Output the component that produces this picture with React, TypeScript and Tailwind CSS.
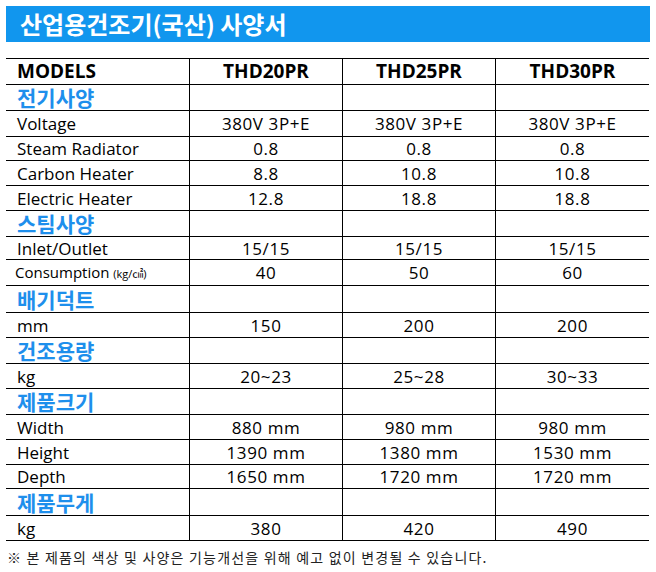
import React from "react";

type Row =
  | { kind: "head"; h: number }
  | { kind: "cat"; label: string; h: number }
  | { kind: "data"; label: React.ReactNode; vals: string[]; h: number };

const rows: Row[] = [
  { kind: "head", h: 26 },
  { kind: "cat", label: "전기사양", h: 26 },
  { kind: "data", label: "Voltage", vals: ["380V 3P+E", "380V 3P+E", "380V 3P+E"], h: 26 },
  { kind: "data", label: "Steam Radiator", vals: ["0.8", "0.8", "0.8"], h: 24 },
  { kind: "data", label: "Carbon Heater", vals: ["8.8", "10.8", "10.8"], h: 25 },
  { kind: "data", label: "Electric Heater", vals: ["12.8", "18.8", "18.8"], h: 25 },
  { kind: "cat", label: "스팀사양", h: 26 },
  { kind: "data", label: "Inlet/Outlet", vals: ["15/15", "15/15", "15/15"], h: 23 },
  {
    kind: "data",
    label: (
      <span className="text-[15px] -ml-[2px]">
        Consumption <span className="text-[11px]">(kg/㎠)</span>
      </span>
    ),
    vals: ["40", "50", "60"],
    h: 26,
  },
  { kind: "cat", label: "배기덕트", h: 27 },
  { kind: "data", label: "mm", vals: ["150", "200", "200"], h: 25 },
  { kind: "cat", label: "건조용량", h: 26 },
  { kind: "data", label: "kg", vals: ["20~23", "25~28", "30~33"], h: 25 },
  { kind: "cat", label: "제품크기", h: 26 },
  { kind: "data", label: "Width", vals: ["880 mm", "980 mm", "980 mm"], h: 25 },
  { kind: "data", label: "Height", vals: ["1390 mm", "1380 mm", "1530 mm"], h: 25 },
  { kind: "data", label: "Depth", vals: ["1650 mm", "1720 mm", "1720 mm"], h: 24 },
  { kind: "cat", label: "제품무게", h: 27 },
  { kind: "data", label: "kg", vals: ["380", "420", "490"], h: 25 },
];

const font = { fontFamily: '"Open Sans", "Noto Sans CJK KR", sans-serif' };
const kr = { fontFamily: '"Noto Sans CJK KR", sans-serif' };

export default function App() {
  return (
    <div className="w-[656px] h-[572px] bg-white p-[6px] text-black" style={font}>
      <div className="h-[36px] bg-[#1196ee] flex items-center pl-[14px]">
        <span className="text-white font-bold text-[24px] leading-none" style={kr}>
          산업용건조기(국산) 사양서
        </span>
      </div>
      <div className="mt-[16px] w-[643px] border-t border-black">
        {rows.map((r, i) => (
          <div
            key={i}
            className="grid grid-cols-[183px_153px_153px_154px] border-b border-black box-border"
            style={{ height: r.h }}
          >
            {r.kind === "head" && (
              <>
                <div className="flex items-center pl-[11px] font-bold text-[19px] leading-none">MODELS</div>
                {["THD20PR", "THD25PR", "THD30PR"].map((m) => (
                  <div
                    key={m}
                    className="border-l border-black flex items-center justify-center font-bold text-[19px] leading-none"
                  >
                    {m}
                  </div>
                ))}
              </>
            )}
            {r.kind === "cat" && (
              <>
                <div
                  className="flex items-center pl-[11px] font-bold text-[21px] text-[#1e8fec] leading-none"
                  style={kr}
                >
                  {r.label}
                </div>
                <div className="border-l border-black" />
                <div className="border-l border-black" />
                <div className="border-l border-black" />
              </>
            )}
            {r.kind === "data" && (
              <>
                <div className="flex items-center pl-[11px] text-[17px] leading-none whitespace-nowrap">
                  {r.label}
                </div>
                {r.vals.map((v, j) => (
                  <div
                    key={j}
                    className="border-l border-black flex items-center justify-center text-[17px] leading-none tracking-[0.6px] whitespace-nowrap"
                  >
                    {v}
                  </div>
                ))}
              </>
            )}
          </div>
        ))}
      </div>
      <div className="mt-[9px] pl-[1px] text-[14px] text-[#222] leading-none tracking-[1.2px]" style={kr}>
        ※ 본 제품의 색상 및 사양은 기능개선을 위해 예고 없이 변경될 수 있습니다.
      </div>
    </div>
  );
}
